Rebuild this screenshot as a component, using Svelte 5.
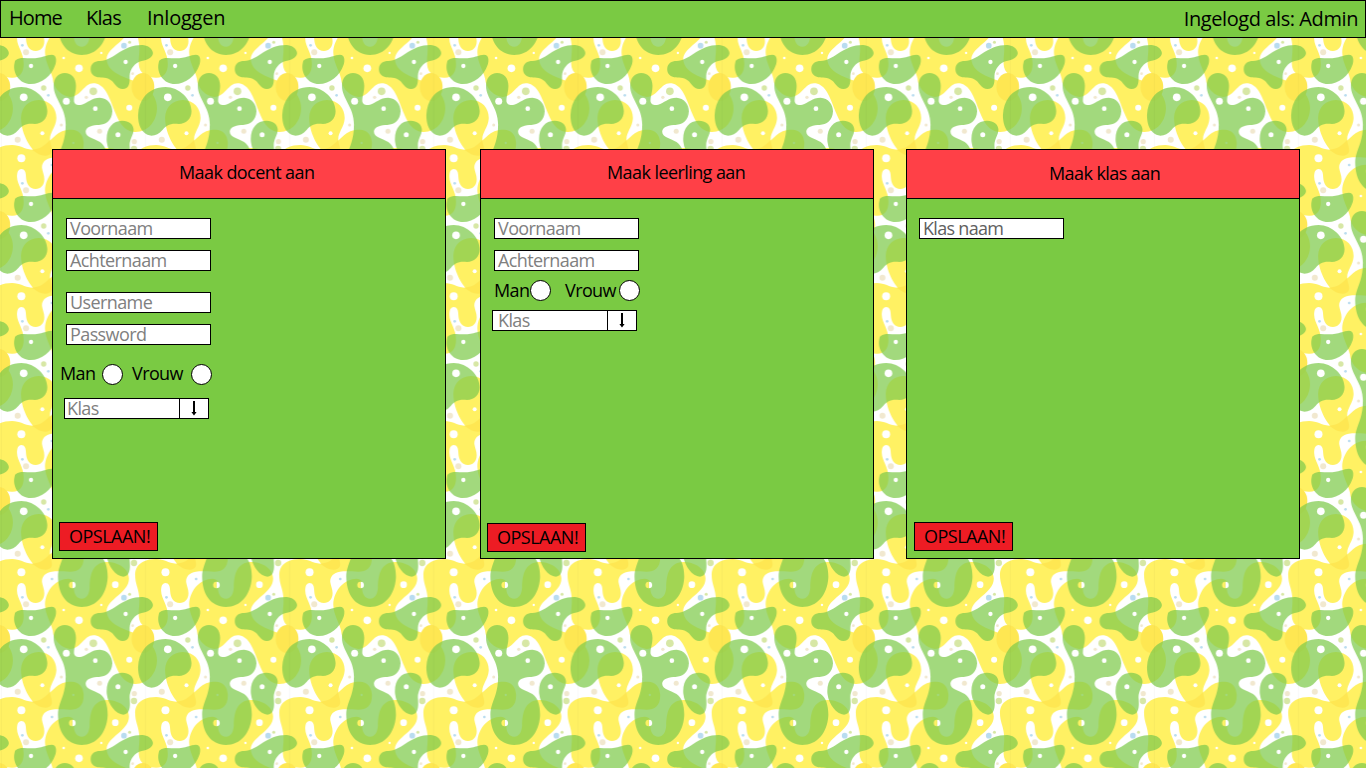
<script>
  const dots = [
    ['#fff', [[64,49,12],[93,186,6.5],[71,280,11.5],[127,388,6],[346,86,10],[191,162,4],[304,147,3.5],[237,193,11.5],[377,174,6.5],[199,292,10.5],[286,314,7],[388,311,9],[354,392,7.5]]],
    ['#f1e8cf', [[78,145,9],[53,407,9],[184,363,4.5],[299,382,7.5],[259,280,5],[398,209,4],[403,413,8]]],
    ['#d7e7a5', [[131,252,8],[280,262,11.5],[389,115,4.5],[402,21,9.5]]],
    ['#b9dcf0', [[372,125,8.5],[67,124,4],[145,274,4],[156,69,4]]]
  ];
  const shifts = [];
  for (const y of [-414, 0, 414]) for (const x of [-432.4, 0, 432.4]) shifts.push([x, y]);
</script>

<svg class="backdrop" width="1366" height="768" aria-hidden="true">
  <defs>
    <g id="yellow" fill="#fff163">
      <path d="M36 9C60 9 72 21 96 23C130 23 150-8 175-26C190-37 205-37 215-37C238-37 251-20 251 5C251 35 235 47 210 47C190 47 175 45 155 47C135 50 125 62 126 78C128 92 133 98 133 112C133 130 122 141 107 141C88 141 79 125 78 105C78 90 74 81 64 81C54 81 51 92 51 105C52 130 71 145 71 180C71 205 60 221 38 221C15 222-15 212-16 180C-17 155-12 145-15 120C-17 95-27 85-27 55C-26 25 0 9 36 9Z" />
      <path d="M320 18C352 18 387 36 387 68C387 110 320 130 320 165C322 215 395 222 432 245C460 265 472 290 471 315C470 355 440 385 405 384C365 382 352 340 340 312C325 270 310 238 280 238C252 238 245 277 210 279C185 277 165 255 160 235C158 205 135 180 135 145C137 100 170 69 205 68C218 69 225 76 222 92C220 110 228 128 245 128C262 128 268 110 269 95C270 60 275 20 320 18Z" />
      <path d="M115 288C150 287 171 315 169 345C167 370 150 385 150 405C150 420 158 430 155 445C150 458 130 457 115 450C90 438 62 385 63 340C64 310 85 289 115 288Z" />
    </g>
    <g id="amber" fill="#fee752">
      <ellipse cx="429" cy="249" rx="34" ry="42" />
      <path d="M96 437C125 435 138 420 150 408C150 420 158 432 155 445C150 458 130 457 115 450Z" />
    </g>
    <g id="green" fill="rgb(128,203,77)" fill-opacity=".73">
      <path d="M45 170C60 158 75 163 95 163C125 163 140 152 155 152C170 152 170 170 166 182C155 215 125 240 92 240C60 240 38 210 43 180Z" />
      <path d="M64 249C105 249 142 285 142 322C142 345 125 360 104 360C80 356 65 365 55 378C45 390 35 395 22 395C-5 393-19 365-18 332C-16 285 15 249 64 249Z" />
      <path d="M194 207C215 207 228 222 228 245C228 265 222 275 222 290C222 300 232 305 245 302C262 297 275 281 300 281C322 282 337 300 337 322C336 350 318 362 297 363C280 363 257 368 257 383C258 400 280 402 300 414C316 424 324 450 323 480C320 530 290 567 245 567C200 566 174 530 174 475C174 440 197 420 197 365C199 310 161 285 161 245C161 222 175 207 194 207Z" />
      <path d="M425 123C445 123 459 135 459 148C457 163 440 168 425 171C405 176 390 195 389 215C389 228 392 255 368 255C350 254 345 238 335 230C320 219 305 222 293 220C280 218 271 208 272 194C273 178 285 171 300 171C320 170 335 160 350 150C375 133 400 123 425 123Z" />
      <path d="M365 350C385 349 401 360 401 378C400 395 388 405 389 425C390 440 394 475 370 476C345 474 320 440 320 405C320 370 340 351 365 350Z" />
    </g>
    <g id="dots">
      {#each dots as [fill, list]}
        {#each list as [cx, cy, r]}<circle {cx} {cy} {r} {fill} />{/each}
      {/each}
      <path d="M217 77a10 10 0 0 1 0 20Z" fill="#fff" />
      <path d="M217 77a10 10 0 0 0 0 20Z" fill="#fff163" />
      <circle cx="220" cy="417" r="3.5" fill="#a2d97d" />
    </g>
    <pattern id="tile" width="432.4" height="414" patternUnits="userSpaceOnUse" patternTransform="translate(0 4) scale(.33333)">
      <rect width="433" height="414" fill="#fff" />
      {#each ['#yellow', '#amber', '#green', '#dots'] as layer}
        {#each shifts as [x, y]}<use href={layer} {x} {y} />{/each}
      {/each}
      <rect x="2.6" width="3" height="414" fill="#000" fill-opacity=".025" />
    </pattern>
  </defs>
  <rect width="1366" height="768" fill="url(#tile)" />
</svg>

<div class="page">
  <nav>
    <a href="#home" class="home">Home</a>
    <a href="#klas" class="klas">Klas</a>
    <a href="#inloggen" class="login">Inloggen</a>
    <span class="user">Ingelogd als: Admin</span>
  </nav>

  <main>
    <section class="docent">
      <h2><span>Maak docent aan</span></h2>
      <div class="body">
        <div class="field"><span>Voornaam</span></div>
        <div class="field"><span>Achternaam</span></div>
        <div class="field account"><span>Username</span></div>
        <div class="field"><span>Password</span></div>
        <div class="radios"><span class="man">Man</span><i></i><span class="vrouw">Vrouw</span><i></i></div>
        <div class="field select"><span>Klas</span>{@render arrow()}</div>
        <button>OPSLAAN!</button>
      </div>
    </section>

    <section class="leerling">
      <h2><span>Maak leerling aan</span></h2>
      <div class="body">
        <div class="field"><span>Voornaam</span></div>
        <div class="field"><span>Achternaam</span></div>
        <div class="radios"><span class="man">Man</span><i></i><span class="vrouw">Vrouw</span><i></i></div>
        <div class="field select"><span>Klas</span>{@render arrow()}</div>
        <button>OPSLAAN!</button>
      </div>
    </section>

    <section class="klasse">
      <h2><span>Maak klas aan</span></h2>
      <div class="body">
        <div class="field"><span>Klas naam</span></div>
        <button>OPSLAAN!</button>
      </div>
    </section>
  </main>
</div>

{#snippet arrow()}
  <b><svg width="28" height="19" viewBox="0 0 28 19"><path d="M13 2h2v11h1.6L14 16.5L11.4 13H13Z" /></svg></b>
{/snippet}

<style>
  :global(body) { overflow: hidden; background: #fff; }
  * { box-sizing: border-box; }
  .backdrop { position: absolute; top: 0; left: 0; display: block; }
  .page { position: relative; height: 768px; font: 18px/20px "Open Sans", "Noto Sans", sans-serif; letter-spacing: -.6px; color: #000; white-space: nowrap; }
  nav { display: flex; height: 38px; border: 1px solid #000; background: #7aca43; padding: 4px 7px 0 8px; font-size: 20px; line-height: 26px; }
  nav a { color: inherit; text-decoration: none; }
  .home { width: 77px; letter-spacing: -.9px; }
  .klas { width: 61px; letter-spacing: -.75px; }
  .login { letter-spacing: -.25px; }
  .user { margin-left: auto; padding-top: 1px; letter-spacing: -.42px; }
  main { display: flex; padding: 111px 0 0 52px; }
  section { width: 394px; height: 410px; border: 1px solid #000; background: #7aca43; display: flex; flex-direction: column; }
  .leerling { margin-left: 34px; }
  .klasse { margin-left: 32px; }
  h2 { margin: 0; height: 49px; flex: none; background: #ff4047; border-bottom: 1px solid #000; font-size: 18px; font-weight: 400; line-height: 20px; letter-spacing: -.58px; padding: 12px 0 0 126px; }
  .klasse h2 { padding: 13px 0 0 142px; }
  .body { flex: 1; display: flex; flex-direction: column; align-items: flex-start; padding: 19px 0 7px 13px; }
  .klasse .body { padding-left: 12px; }
  .field { width: 145px; height: 21px; flex: none; display: flex; border: 1px solid #000; background: #fff; color: #808080; line-height: 18px; padding-left: 3px; margin-bottom: 11px; }
  .klasse .field { color: #606060; padding-left: 3px; letter-spacing: -.7px; }
  .account { margin-top: 10px; }
  .radios { display: flex; height: 21px; margin-left: -6px; line-height: 18px; }
  .docent .radios { margin-top: 8px; }
  .leerling .radios { margin-left: 0; margin-top: -2px; }
  .man { width: 42px; }
  .vrouw { width: 59px; margin-left: 9px; }
  .leerling .man { width: 36px; }
  .leerling .vrouw { width: 54px; margin-left: 14px; line-height: 20px; }
  .leerling .man { line-height: 20px; }
  i { width: 21px; height: 21px; border: 1px solid #000; border-radius: 50%; background: #fff; }
  .select { margin: 13px 0 0 -2px; padding-left: 2px; }
  .leerling .select { margin-top: 9px; padding-left: 5px; }
  b { margin-left: auto; width: 29px; height: 19px; border-left: 1px solid #000; display: block; }
  b svg { display: block; }
  button { margin: auto 0 0 -7px; width: 99px; height: 29px; border: 1px solid #000; border-radius: 0; background: #ed1c24; color: #000; font: 18px/25px "Open Sans", "Noto Sans", sans-serif; padding: 0 0 0 9px; text-align: left; letter-spacing: -.5px; }
  .klasse button { margin-left: -5px; }
  .leerling .body { padding-bottom: 6px; }
</style>
